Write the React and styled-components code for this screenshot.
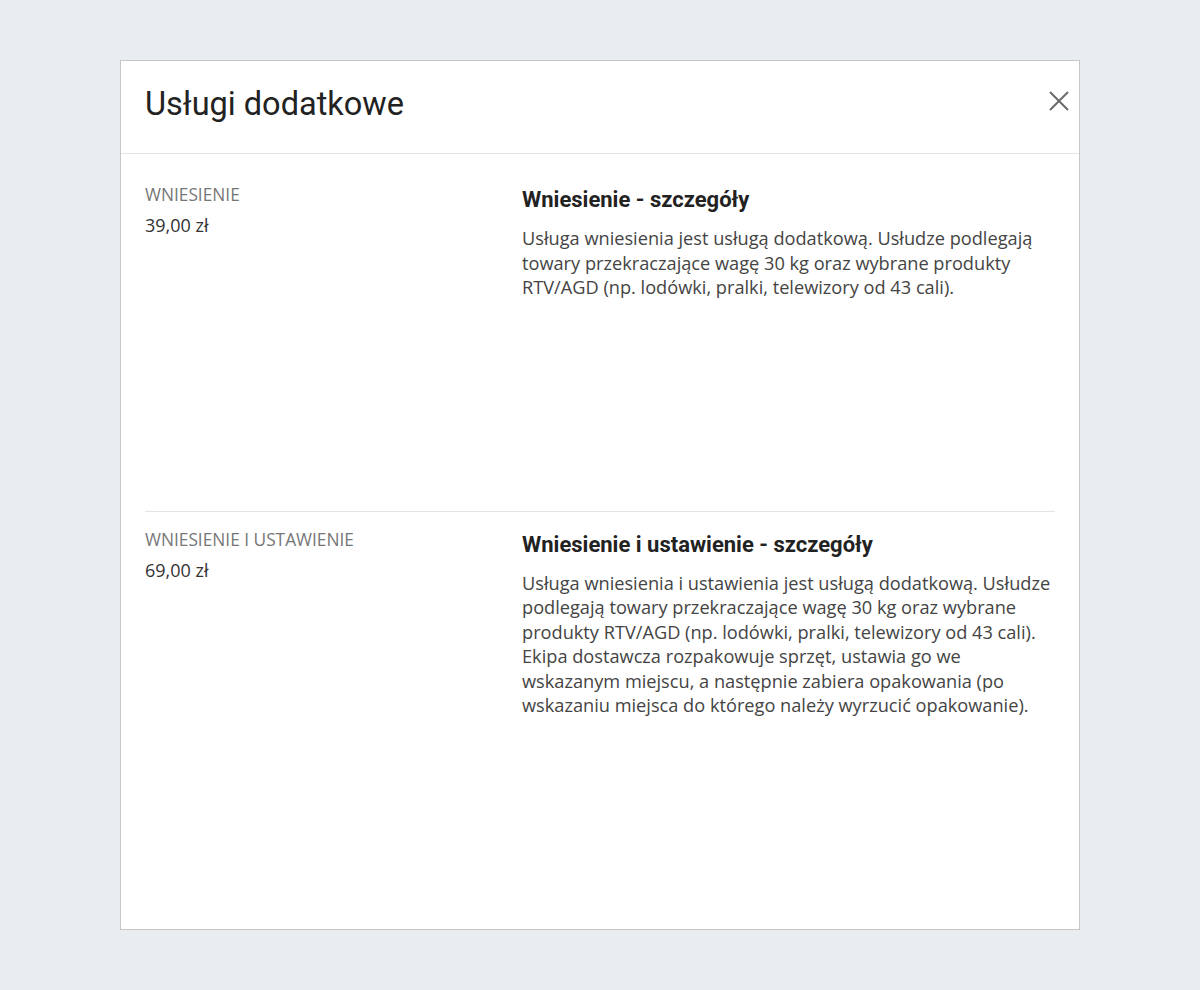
import React from "react";
import styled, { createGlobalStyle } from "styled-components";

const GlobalStyle = createGlobalStyle`
  body {
    margin: 0;
    background: #e9edf0;
    font-family: "Open Sans", "Liberation Sans", sans-serif;
  }
`;

const Page = styled.div`
  min-height: 990px;
  padding-top: 60px;
  box-sizing: border-box;
`;

const Modal = styled.div`
  width: 960px;
  margin: 0 auto;
  background: #fff;
  border: 1px solid #c6c6c6;
  box-sizing: border-box;
`;

const Header = styled.div`
  height: 93px;
  display: flex;
  align-items: center;
  justify-content: space-between;
  padding: 0 0 6px 24px;
  box-sizing: border-box;
  border-bottom: 1px solid #e4e4e4;
`;

const Title = styled.h2`
  margin: 0;
  font-family: Roboto, "Liberation Sans", sans-serif;
  font-weight: 400;
  font-size: 32.5px;
  color: #222;
`;

const CloseButton = styled.button`
  width: 40px;
  height: 40px;
  margin-bottom: 6px;
  border: none;
  background: none;
  padding: 0;
  display: flex;
  align-items: center;
  justify-content: center;
  cursor: pointer;
  color: #6a6a6a;
`;

const Body = styled.div`
  padding: 13px 24px 0 24px;
`;

const Section = styled.div`
  display: grid;
  grid-template-columns: 377px 1fr;
  padding: 17px 0 22px;
  border-top: ${(p) => (p.$divided ? "1px solid #e4e4e4" : "none")};
`;

const Label = styled.div`
  font-size: 17.3px;
  line-height: 22px;
  color: #767676;
  text-transform: uppercase;
`;

const Price = styled.div`
  margin-top: 7px;
  font-size: 18px;
  line-height: 24px;
  color: #333;
`;

const Heading = styled.h3`
  margin: 2px 0 12px;
  font-family: Roboto, "Liberation Sans", sans-serif;
  font-weight: 700;
  font-size: 22px;
  line-height: 28px;
  color: #222;
`;

const Text = styled.p`
  margin: 0;
  font-size: 18.2px;
  line-height: 24.5px;
  color: #444;
`;

const Picture = styled.div`
  height: 189px;
`;

const services = [
  {
    label: "Wniesienie",
    price: "39,00 zł",
    title: "Wniesienie - szczegóły",
    text: "Usługa wniesienia jest usługą dodatkową. Usłudze podlegają towary przekraczające wagę 30 kg oraz wybrane produkty RTV/AGD (np. lodówki, pralki, telewizory od 43 cali).",
  },
  {
    label: "Wniesienie i ustawienie",
    price: "69,00 zł",
    title: "Wniesienie i ustawienie - szczegóły",
    text: "Usługa wniesienia i ustawienia jest usługą dodatkową. Usłudze podlegają towary przekraczające wagę 30 kg oraz wybrane produkty RTV/AGD (np. lodówki, pralki, telewizory od 43 cali). Ekipa dostawcza rozpakowuje sprzęt, ustawia go we wskazanym miejscu, a następnie zabiera opakowania (po wskazaniu miejsca do którego należy wyrzucić opakowanie).",
  },
];

const App = () => {
  return (
    <Page>
      <GlobalStyle />
      <Modal>
        <Header>
          <Title>Usługi dodatkowe</Title>
          <CloseButton aria-label="Zamknij">
            <svg width="20" height="20" viewBox="0 0 20 20">
              <path
                d="M1 1 L19 19 M19 1 L1 19"
                stroke="currentColor"
                strokeWidth="2"
                fill="none"
              />
            </svg>
          </CloseButton>
        </Header>
        <Body>
          {services.map((s, i) => (
            <Section key={s.label} $divided={i > 0}>
              <div>
                <Label>{s.label}</Label>
                <Price>{s.price}</Price>
              </div>
              <div>
                <Heading>{s.title}</Heading>
                <Text>{s.text}</Text>
                <Picture />
              </div>
            </Section>
          ))}
        </Body>
      </Modal>
    </Page>
  );
};

export default App;
